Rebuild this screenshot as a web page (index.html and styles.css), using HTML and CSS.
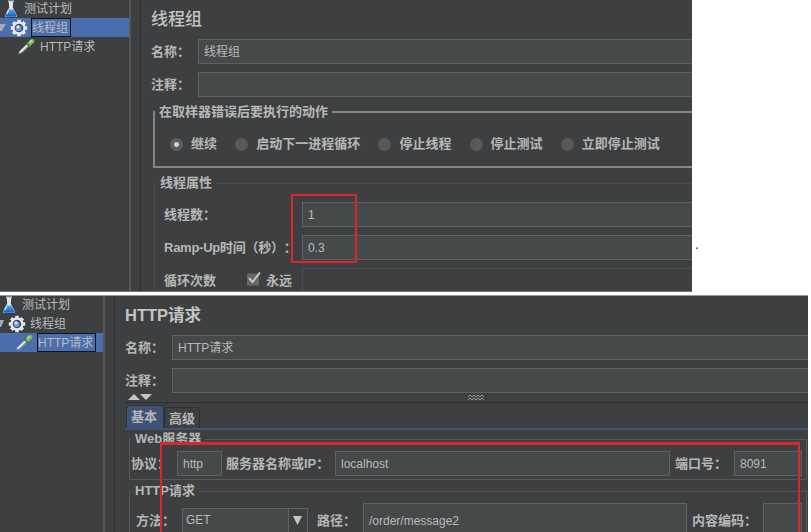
FILE: index.html
```html
<!DOCTYPE html>
<html lang="zh-CN">
<head>
<meta charset="utf-8">
<title>线程组</title>
<link rel="stylesheet" href="styles.css">
</head>
<body>
<svg class="defs" width="0" height="0">
  <defs>
    <linearGradient id="liquid" x2="0" y2="1"><stop offset="0" stop-color="#5ba9ef"/><stop offset="1" stop-color="#075bc4"/></linearGradient>
    <symbol id="flask" viewBox="0 0 14 18">
      <path d="M4.7 1.5h4.6l-.5 6 4.2 8q.5 1.5-1 1.5H2q-1.500 0-1-1.500l4.200-8z" fill="#dbe8f2"/>
      <path d="M4.300 9.500h5.400l2.900 6q.3 1.300-.8 1.300H2.200q-1.100 0-.8-1.300z" fill="url(#liquid)"/>
      <path d="M4.500 10 3 14" stroke="#c9e6ff" stroke-width="1.400"/>
      <path d="M4 1.200h6" stroke="#b9cbd8" stroke-width="1.400"/>
    </symbol>
    <symbol id="gear" viewBox="0 0 18 18">
      <path d="M9 .8v16.400M.8 9h16.400M3.200 3.200l11.600 11.600M14.800 3.200 3.200 14.800" stroke="#e4e6e8" stroke-width="3.600"/>
      <circle cx="9" cy="9" r="6.600" fill="#e9eaeb"/>
      <circle cx="9" cy="9" r="4.300" fill="#2c4c7e"/>
      <circle cx="8.700" cy="9.200" r="2.900" fill="#7998c8"/>
      <circle cx="8" cy="8" r="1.400" fill="#e2ecf8"/>
    </symbol>
    <symbol id="pipette" viewBox="0 0 18 18">
      <path d="M1 16.500 3.500 12 10 5.800l2.300 2.300L5.500 14.500z" fill="#a4aaa7"/>
      <path d="M2.500 14.500 10.500 7" stroke="#f2f4f2" stroke-width="1.200"/>
      <path d="M9 4.500 13.500 9" stroke="#3f7a35" stroke-width="1.800"/>
      <path d="m10.500 5 3-3.600Q15.500.3 17 1.800q1 1.500-.2 3L13 8z" fill="#7dbb5c"/>
      <path d="m12.500 4.500 2.300-2.300" stroke="#c5e6ae" stroke-width="1.300"/>
    </symbol>
  </defs>
</svg>

<section class="shot shot-top">
  <aside class="tree">
    <div class="node root"><svg class="flask"><use href="#flask"/></svg><span>测试计划</span></div>
    <div class="node group selected"><i class="twisty"></i><svg class="gear"><use href="#gear"/></svg><span class="focus">线程组</span></div>
    <div class="node leaf"><svg class="pipette"><use href="#pipette"/></svg><span>HTTP请求</span></div>
  </aside>
  <div class="splitter"></div>
  <main class="panel">
    <h1>线程组</h1>
    <div class="row"><label>名称：</label><div class="field">线程组</div></div>
    <div class="row"><label>注释：</label><div class="field"></div></div>
    <fieldset class="actions">
      <legend>在取样器错误后要执行的动作</legend>
      <div class="radios">
        <span class="radio"><i class="dot on"></i>继续</span>
        <span class="radio"><i class="dot"></i>启动下一进程循环</span>
        <span class="radio"><i class="dot"></i>停止线程</span>
        <span class="radio"><i class="dot"></i>停止测试</span>
        <span class="radio"><i class="dot"></i>立即停止测试</span>
      </div>
    </fieldset>
    <fieldset class="props">
      <legend>线程属性</legend>
      <div class="row"><label>线程数：</label><div class="field">1</div></div>
      <div class="row"><label class="ramp">Ramp-Up时间（秒）：</label><div class="field">0.3</div></div>
      <div class="row"><label>循环次数</label>
        <span class="forever"><svg class="check" viewBox="0 0 15 15"><path d="M1 2.500h12v12H1z" fill="#656767"/><path d="m3 7 3.500 4L14 1.500" fill="none" stroke="#c7c9c9" stroke-width="2"/></svg>永远</span>
        <div class="field off"></div></div>
    </fieldset>
  </main>
  <div class="mark mark-top"></div>
</section>
<span class="period">.</span>

<section class="shot shot-bottom">
  <aside class="tree">
    <div class="node root"><svg class="flask"><use href="#flask"/></svg><span>测试计划</span></div>
    <div class="node group"><i class="twisty"></i><svg class="gear"><use href="#gear"/></svg><span>线程组</span></div>
    <div class="node leaf selected"><svg class="pipette"><use href="#pipette"/></svg><span class="focus">HTTP请求</span></div>
  </aside>
  <div class="splitter"></div>
  <main class="panel">
    <h1>HTTP请求</h1>
    <div class="row"><label>名称：</label><div class="field">HTTP请求</div></div>
    <div class="row"><label>注释：</label><div class="field"></div></div>
    <div class="divider">
      <svg class="arrows" viewBox="0 0 26 8"><path d="M1 7 7 1l6 6zM13 1h12l-6 6z" fill="#c4c6c6"/></svg>
      <svg class="grip" viewBox="0 0 16 5"><path d="m0 2 2-2 2 2 2-2 2 2 2-2 2 2 2-2 2 2M0 5l2-2 2 2 2-2 2 2 2-2 2 2 2-2 2 2" fill="none" stroke="#a4a6a6" stroke-width=".9"/></svg>
    </div>
    <div class="tabs"><span class="tab active">基本</span><span class="tab">高级</span></div>
    <div class="page">
      <fieldset class="web">
        <legend>Web服务器</legend>
        <div class="line">
          <label>协议：</label><div class="field protocol">http</div>
          <label>服务器名称或IP：</label><div class="field server">localhost</div>
          <label>端口号：</label><div class="field port">8091</div>
        </div>
      </fieldset>
      <fieldset class="request">
        <legend>HTTP请求</legend>
        <div class="line">
          <label>方法：</label><div class="combo"><span>GET</span><b><svg width="10" height="9"><path d="M0 0h9L4.500 9z" fill="#c4c6c6"/></svg></b></div>
          <label>路径：</label><div class="field path">/order/message2</div>
          <label>内容编码：</label><div class="field encoding"></div>
        </div>
      </fieldset>
    </div>
  </main>
  <div class="mark mark-bottom"></div>
</section>
</body>
</html>
```

FILE: styles.css
```css
* { box-sizing: border-box; }
html, body { height: 100%; }
body {
  margin: 0;
  background: #fff;
  overflow: hidden;
  position: relative;
  font: 12px "Liberation Sans", "Noto Sans CJK SC", sans-serif;
  color: #b9bbbb;
  white-space: nowrap;
  text-spacing-trim: space-all;
}
.defs { position: absolute; }
.shot { display: flex; position: relative; overflow: hidden; background: #3d3f40; }
.shot-top { width: 692px; height: 292px; border-bottom: 1px solid #777; }
.shot-bottom { width: 808px; height: 237px; margin-top: 3px; border-top: 1px solid #999; }

/* Tree */
.tree { flex: none; width: 129px; margin-top: -1px; }
.shot-bottom .tree { width: 103px; }
.node { display: flex; align-items: center; height: 19px; }
.node svg { flex: none; display: block; }
.node span { line-height: 17px; padding-top: 1px; }
.selected { background: #4b6eaf; }
.node .focus { border: 1px solid #101318; line-height: 17px; height: 19px; padding: 1px 2px 0 0; margin-left: -1px; }
.flask { width: 14px; height: 18px; margin: 0 6px 0 4px; }
.twisty { width: 6px; height: 7px; background: #a5aaaf; clip-path: polygon(0 0, 100% 0, 30% 100%, 0 100%); margin-right: 4px; }
.gear { width: 18px; height: 18px; margin-right: 4px; }
.pipette { width: 18px; height: 18px; margin: 0 5px 0 17px; }
.shot-bottom .flask { margin-left: 2px; }
.shot-bottom .twisty { width: 4px; }
.shot-bottom .pipette { margin-left: 15px; }
.splitter { flex: none; width: 12px; border-left: 2px solid #555758; border-right: 1px solid #303233; }

/* Panels */
.panel { flex: 1; min-width: 0; padding-left: 10px; }
h1 { margin: 0; height: 39px; font-size: 17px; line-height: 39px; font-weight: 500; color: #c2c4c4; }
.shot-bottom h1 { font-size: 16.5px; font-weight: 700; }
.row { display: flex; align-items: center; height: 25px; margin-bottom: 8px; }
label, legend, .radio, .forever, .tab { font-size: 13px; font-weight: 700; color: #b6b8b8; }
.row label { flex: none; width: 47px; padding-bottom: 2px; }
.field {
  flex: 1;
  height: 25px;
  line-height: 24px;
  padding-left: 5px;
  border: 1px solid #5f6263;
  background: #45494a;
}
.panel > .row .field, .props .field { border-right: 0; }
.off { background: #3d3f40; border-color: #4b4e4f; }
fieldset { margin: 0; padding: 0; min-width: 0; border: 1px solid #565859; }
legend { line-height: 16px; height: 16px; padding: 0 4px; }

.actions { height: 64px; margin: -1px 0 0 2px; border: 2px solid #858787; border-right: 0; }
.radios { display: flex; gap: 18.2px; padding: 15px 0 0 15px; }
.radio { display: flex; align-items: center; line-height: 18px; }
.dot { width: 13px; height: 13px; border-radius: 50%; background: #58595a; margin-right: 8px; }
.on { background: radial-gradient(circle, #d0d0d0 0 2px, #5c5d5e 3px); }

.props { height: 140px; margin: 7px 0 0 3px; padding: 11px 0 0 9px; border-right: 0; border-color: #4b4d4e; }
.props legend { margin-left: -8px; }
.props .row label { width: 138px; }
.props .row .ramp { letter-spacing: -.25px; }
.props .row:last-child label { width: 82px; }
.forever { display: flex; align-items: center; width: 56px; padding-bottom: 2px; }
.check { width: 15px; height: 15px; margin-right: 5px; margin-top: -2px; }

/* Tabbed area */
.shot-bottom .panel > .row + .row { margin-bottom: 0; }
.divider { display: flex; height: 10px; border-bottom: 1px solid #2c2e2f; }
.arrows { width: 26px; height: 8px; margin-left: 2px; }
.grip { width: 16px; height: 5px; margin: 2px 0 0 315px; }
.tabs { display: flex; align-items: flex-end; height: 27px; padding-left: 1px; border-bottom: 2px solid #3b5478; }
.tab { width: 36px; height: 21px; line-height: 21px; text-align: center; border: 1px solid #2f3132; border-bottom: 0; border-radius: 4px 4px 0 0; }
.active { width: 38px; height: 23px; line-height: 21px; padding-right: 2px; background: #3f5377; }
.page { padding: 1px 1px 0 4px; }
.page legend { margin-left: 0; }
.line { display: flex; align-items: center; }
.line .field { flex: none; }
.line label { flex: none; padding-bottom: 2px; }
.web { height: 49px; padding: 4px 0 0 1px; }
.web label:nth-of-type(1) { width: 46px; }
.protocol { width: 45px; margin-right: 4px; }
.web label:nth-of-type(2) { width: 109px; }
.server { width: 335px; margin-right: 5px; }
.web label:nth-of-type(3) { width: 59px; }
.port { width: 68px; }
.request { height: 70px; margin-top: 3px; padding: 4px 0 0 6px; }
.page .request legend { margin-left: -5px; }
.request .field { height: 35px; line-height: 34px; }
.combo { display: flex; width: 126px; height: 25px; margin-right: 9px; border: 1px solid #5f6263; background: #45494a; line-height: 22px; }
.combo span { width: 105px; padding-left: 3px; }
.combo b { display: flex; flex: 1; align-items: center; justify-content: center; border-left: 1px solid #5f6263; background: #3d3f40; }
.request label:nth-of-type(1) { width: 46px; }
.request label:nth-of-type(2) { width: 46px; }
.path { width: 324px; margin-right: 5px; }
.request label:nth-of-type(3) { width: 71px; }
.encoding { width: 39px; }

/* Red callouts over the screenshots */
.mark { position: absolute; border: 2px solid #d8282c; }
.mark-top { left: 291px; top: 194px; width: 66px; height: 69px; }
.mark-bottom { left: 160px; top: 146px; width: 640px; height: 120px; border-top-width: 3px; }
.period { position: absolute; left: 695px; top: 236px; color: #333; line-height: 16px; font-size: 14px; }
```
